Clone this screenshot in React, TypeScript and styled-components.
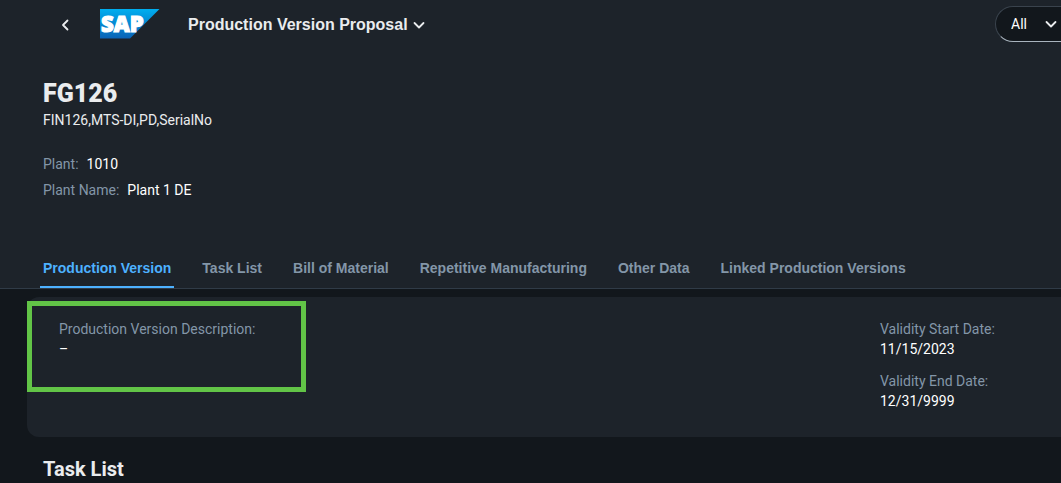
import React from "react";
import styled, { createGlobalStyle } from "styled-components";

const boldFont = `"Liberation Sans", Arial, sans-serif`;

const GlobalStyle = createGlobalStyle`
  *, *::before, *::after { box-sizing: border-box; }
  body {
    margin: 0;
    background: #12171c;
    color: #eaecee;
    font: 400 14px/20px Roboto, "Noto Sans", sans-serif;
  }
  h1, h2, p, dl, dd { margin: 0; }
  button, select { font: inherit; color: inherit; }
`;

const Page = styled.div`
  min-height: 100vh;
  overflow: hidden;
`;

const ObjectHeader = styled.header`
  background: #1d232a;
  border-bottom: 1px solid #303b47;
`;

const ShellBar = styled.div`
  display: flex;
  align-items: center;
  height: 48px;
  padding-left: 56px;
`;

const BackButton = styled.button`
  display: flex;
  padding: 0;
  margin-right: 26px;
  border: 0;
  background: none;
  cursor: pointer;
`;

const LogoLink = styled.a`
  display: flex;
  margin-right: 28px;
`;

const AppTitle = styled.button`
  display: flex;
  align-items: center;
  gap: 4px;
  padding: 2px 0 0;
  border: 0;
  background: none;
  font-family: ${boldFont};
  font-size: 16px;
  font-weight: 700;
  line-height: 24px;
  white-space: nowrap;
  cursor: pointer;
`;

const SearchScope = styled.label`
  display: flex;
  align-items: center;
  width: 66px;
  height: 36px;
  margin-left: auto;
  padding-left: 15px;
  border: 1px solid #3a434d;
  border-bottom-color: #a9b4be;
  border-right: 0;
  border-radius: 18px 0 0 18px;
  background: #12171c;
`;

const ScopeSelect = styled.select`
  width: 33px;
  padding: 0;
  border: 0;
  appearance: none;
  background: none;
  color: #fff;
`;

const Summary = styled.section`
  padding: 34px 43px 48px;
`;

const ObjectTitle = styled.h1`
  font-size: 25px;
  font-weight: 900;
  line-height: 24px;
`;

const Subtitle = styled.p`
  margin: 4px 0 24px;
`;

const Facts = styled.dl`
  display: grid;
  gap: 6px;
`;

const Fact = styled.div`
  display: flex;
  gap: 8px;
`;

const Label = styled.dt`
  color: #8396a8;
`;

const Value = styled.dd`
  color: #fff;
`;

const Tabs = styled.nav`
  display: flex;
  gap: 25px;
  padding-left: 40px;
`;

const Tab = styled.a<{ $active?: boolean }>`
  height: 40px;
  padding: 10px 3px 0;
  border-bottom: 2px solid ${(p) => (p.$active ? "#4db1ff" : "transparent")};
  color: ${(p) => (p.$active ? "#4db1ff" : "#8396a8")};
  font-family: ${boldFont};
  font-weight: 700;
  text-decoration: none;
  white-space: nowrap;
`;

const Card = styled.section`
  position: relative;
  display: grid;
  grid-template-columns: 1fr 181px;
  margin: 8px 0 0 27px;
  padding: 22px 0 26px 32px;
  border-radius: 12px 0 0 12px;
  background: #1d232a;
`;

const Fields = styled.dl`
  display: flex;
  flex-direction: column;
  gap: 12px;
`;

const Highlight = styled.div`
  position: absolute;
  top: 4px;
  left: 0;
  width: 279px;
  height: 91px;
  border: 5px solid #62c447;
  pointer-events: none;
`;

const SectionTitle = styled.h2`
  padding: 20px 43px 0;
  font-size: 20px;
  line-height: 24px;
`;

const tabs = [
  "Production Version",
  "Task List",
  "Bill of Material",
  "Repetitive Manufacturing",
  "Other Data",
  "Linked Production Versions",
];

const ChevronDown = () => (
  <svg width="14" height="14" viewBox="0 0 14 14" fill="none" stroke="currentColor" strokeWidth="1.8" strokeLinecap="round" strokeLinejoin="round" aria-hidden="true">
    <path d="M2.5 5 7 9.5 11.5 5" />
  </svg>
);

const Logo = () => (
  <svg width="60" height="30" viewBox="0 0 60 30" role="img" aria-label="SAP">
    <defs>
      <linearGradient id="logoFill" x1="0" y1="0" x2="0" y2="1">
        <stop offset="0" stopColor="#00aeef" />
        <stop offset="1" stopColor="#0a62b5" />
      </linearGradient>
    </defs>
    <path d="M0 0H59.5L30 29.5H0Z" fill="url(#logoFill)" />
    <text x="1" y="23" fontFamily="'Open Sans', sans-serif" fontSize="22" fontWeight="800" fill="#fff" stroke="#fff" strokeWidth="1.2">
      SAP
    </text>
  </svg>
);

export default function App() {
  return (
    <Page>
      <GlobalStyle />
      <ObjectHeader>
        <ShellBar>
          <BackButton aria-label="Back">
            <svg width="18" height="18" viewBox="0 0 18 18" fill="none" stroke="currentColor" strokeWidth="1.8" strokeLinecap="round" strokeLinejoin="round" aria-hidden="true">
              <path d="M11.5 5.5 7 10 11.5 14.5" />
            </svg>
          </BackButton>
          <LogoLink href="#home">
            <Logo />
          </LogoLink>
          <AppTitle>
            Production Version Proposal
            <ChevronDown />
          </AppTitle>
          <SearchScope>
            <ScopeSelect aria-label="Search scope" defaultValue="All">
              <option>All</option>
            </ScopeSelect>
            <ChevronDown />
          </SearchScope>
        </ShellBar>
        <Summary>
          <ObjectTitle>FG126</ObjectTitle>
          <Subtitle>FIN126,MTS-DI,PD,SerialNo</Subtitle>
          <Facts>
            <Fact>
              <Label>Plant:</Label>
              <Value>1010</Value>
            </Fact>
            <Fact>
              <Label>Plant Name:</Label>
              <Value>Plant 1 DE</Value>
            </Fact>
          </Facts>
        </Summary>
        <Tabs aria-label="Sections">
          {tabs.map((name, i) => (
            <Tab key={name} href={`#section-${i}`} $active={i === 0}>
              {name}
            </Tab>
          ))}
        </Tabs>
      </ObjectHeader>
      <main>
        <Card id="section-0">
          <Fields>
            <div>
              <Label>Production Version Description:</Label>
              <Value>–</Value>
            </div>
          </Fields>
          <Fields>
            <div>
              <Label>Validity Start Date:</Label>
              <Value>11/15/2023</Value>
            </div>
            <div>
              <Label>Validity End Date:</Label>
              <Value>12/31/9999</Value>
            </div>
          </Fields>
          <Highlight />
        </Card>
        <SectionTitle id="section-1">Task List</SectionTitle>
      </main>
    </Page>
  );
}
